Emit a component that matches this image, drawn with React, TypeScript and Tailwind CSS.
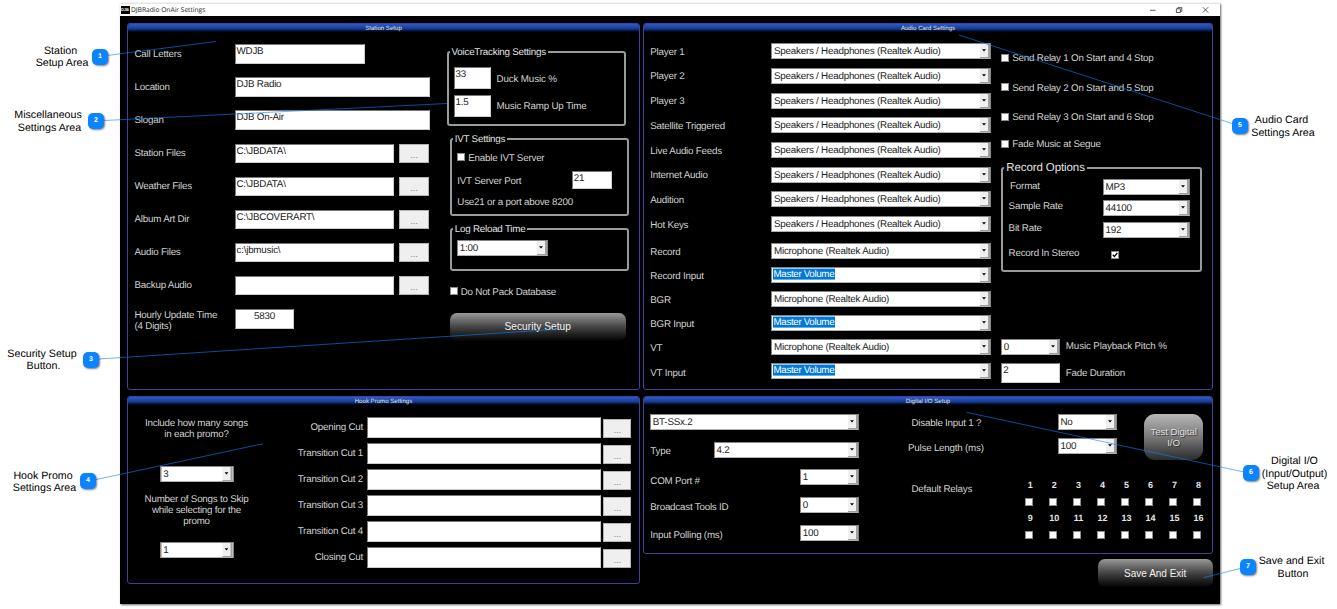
import { clsx } from 'clsx';
import type { ReactNode } from 'react';

interface PanelProps {
  title: string;
  className?: string;
  children: ReactNode;
}

function Panel({ title, className, children }: PanelProps) {
  return (
    <section className={clsx('rounded-[3px] border border-[#41419a] bg-black overflow-hidden', className)}>
      <h2 className="h-[9px] bg-gradient-to-b from-[#2a5ad2] via-[#173a8a] via-55% to-black text-center text-[6.1px] leading-[9px] tracking-normal text-[#e2e2e2]">
        {title}
      </h2>
      {children}
    </section>
  );
}

function Group({ title, className, legendClass, children }: PanelProps & { legendClass?: string }) {
  return (
    <fieldset className={clsx('rounded-[3px] border-2 border-[#979c9c]', className)}>
      <legend className={clsx('whitespace-nowrap text-[#e2e2e2]', legendClass ?? 'ml-[1px] px-[2px] pt-[1px] leading-[11px]')}>{title}</legend>
      {children}
    </fieldset>
  );
}

function Label({ children, className }: { children: ReactNode; className?: string }) {
  return <span className={clsx('shrink-0 translate-y-[0.6px] whitespace-nowrap leading-[11px] text-[#d2d2d2]', className)}>{children}</span>;
}

// Text box: the value sits at the top, not in the middle
function Field({ value, className }: { value?: string; className?: string }) {
  return (
    <div className={clsx('shrink-0 border border-t-[#777] border-l-[#777] border-r-[#ccc] border-b-[#ccc] bg-white pl-[1px] leading-[14px] text-[#222]', className)}>
      {value}
    </div>
  );
}

function Combo({ value, className, selected }: { value: string; className?: string; selected?: boolean }) {
  return (
    <div className={clsx('flex h-[16px] shrink-0 border border-[#858585] border-b-[#b0b0b0] bg-white text-[#222]', className)}>
      <span className="min-w-0 flex-1 translate-y-[0.6px] whitespace-nowrap pl-[1.5px] leading-[14px]">
        {selected ? (
          <span className="-ml-[1px] block h-[11px] w-[62px] bg-[#0078d7] pl-[0.5px] leading-[11px] tracking-[-0.35px] text-white">{value}</span>
        ) : (
          value
        )}
      </span>
      <span className="flex w-[10px] items-center justify-center border-r-2 border-b border-[#a0a0a0] bg-[#f0f0f0]">
        <svg width="4" height="3" viewBox="0 0 4 3"><path d="M0 0.3h4L2 2.6z" fill="#000" /></svg>
      </span>
    </div>
  );
}

function Browse({ className }: { className?: string }) {
  return (
    <button className={clsx('h-[19.5px] shrink-0 border border-[#b4b4b4] bg-[#efefef] text-center leading-[19px] text-[#8a8a8a]', className)}>...</button>
  );
}

function Box({ checked }: { checked?: boolean }) {
  return (
    <span className="flex size-[8px] shrink-0 items-center justify-center border border-[#8c8c8c] bg-white">
      {checked && (
        <svg width="6" height="6" viewBox="0 0 6 6"><path d="M0.8 2.8L2.4 4.5L5.3 1" fill="none" stroke="#000" strokeWidth="1.3" /></svg>
      )}
    </span>
  );
}

function Check({ label, className }: { label: string; className?: string }) {
  return (
    <div className={clsx('flex h-[12px] items-center gap-[3px]', className)}>
      <Box />
      <Label>{label}</Label>
    </div>
  );
}

const stationRows = [
  { label: 'Call Letters', value: 'WDJB', width: 'w-[130.5px]' },
  { label: 'Location', value: 'DJB Radio', width: 'w-[195px]' },
  { label: 'Slogan', value: 'DJB On-Air', width: 'w-[195px]' },
  { label: 'Station Files', value: 'C:\\JBDATA\\', browse: true },
  { label: 'Weather Files', value: 'C:\\JBDATA\\', browse: true },
  { label: 'Album Art Dir', value: 'C:\\JBCOVERART\\', browse: true },
  { label: 'Audio Files', value: 'c:\\jbmusic\\', browse: true },
  { label: 'Backup Audio', value: '', browse: true },
];

const outputs = ['Player 1', 'Player 2', 'Player 3', 'Satellite Triggered', 'Live Audio Feeds', 'Internet Audio', 'Audition', 'Hot Keys'];
const inputs = ['Record', 'Record Input', 'BGR', 'BGR Input', 'VT', 'VT Input'];
const cuts = ['Opening Cut', 'Transition Cut 1', 'Transition Cut 2', 'Transition Cut 3', 'Transition Cut 4', 'Closing Cut'];

function StationSetup() {
  return (
    <Panel title="Station Setup" className="h-[367px]">
      <div className="flex">
        <div className="flex w-[318.5px] flex-col gap-[13.6px] pt-[11.3px] pl-[6.5px]">
          {stationRows.map(r => (
            <div key={r.label} className="flex h-[19.5px]">
              <Label className="w-[100px] pt-[3.5px]">{r.label}</Label>
              <Field value={r.value} className={r.width ?? 'w-[159.5px]'} />
              {r.browse && <Browse className="ml-[5px] w-[30px]" />}
            </div>
          ))}
          <div className="flex h-[19.5px]">
            <Label className="w-[100px]">Hourly Update Time<br />(4 Digits)</Label>
            <Field value="5830" className="w-[59px] text-center" />
          </div>
        </div>

        <div className="flex flex-col pt-[13.3px]">
          <Group title="VoiceTracking Settings" className="h-[80.2px] w-[179px]">
            <div className="flex flex-col gap-[6px] pt-[9px] pl-[5px]">
              <div className="flex h-[22px] gap-[6px]">
                <Field value="33" className="w-[37px]" />
                <Label className="pt-[5.5px] tracking-[-0.14px]">Duck Music %</Label>
              </div>
              <div className="flex h-[22px] gap-[6px]">
                <Field value="1.5" className="w-[37px]" />
                <Label className="pt-[4.5px] tracking-[-0.2px]">Music Ramp Up Time</Label>
              </div>
            </div>
          </Group>

          <Group title="IVT Settings" className="mt-[6.5px] ml-[3.2px] h-[83px] w-[179px]">
            <div className="pt-[6.5px] pl-[5.6px]">
              <Check label="Enable IVT Server" />
              <div className="mt-[7.8px] flex h-[18px]">
                <Label className="w-[114.4px] pt-[3.5px]">IVT Server Port</Label>
                <Field value="21" className="w-[40.5px]" />
              </div>
              <Label className="mt-[6.5px] block">Use21 or a port above 8200</Label>
            </div>
          </Group>

          <Group title="Log Reload Time" className="mt-[7px] ml-[3.2px] h-[48.5px] w-[179px]">
            <div className="pt-[5.3px] pl-[5.6px]">
              <Combo value="1:00" className="w-[91px]" />
            </div>
          </Group>

          <Check label="Do Not Pack Database" className="mt-[13.7px] ml-[3.2px]" />
          <button className="mt-[15.8px] ml-[3.2px] h-[28px] w-[176px] rounded-[7px] bg-gradient-to-b from-[#9a9a9a] via-[#4c4c4c] via-45% to-[#050505] text-[10.2px] tracking-normal text-[#f0f0f0]">
            Security Setup
          </button>
        </div>
      </div>
    </Panel>
  );
}

function AudioCardSettings() {
  return (
    <Panel title="Audio Card Settings" className="h-[367px]">
      <div className="flex pl-[6.3px]">
        <div className="w-[351px] pt-[10.3px]">
          <div className="flex flex-col gap-[8.7px]">
            {outputs.map(name => (
              <div key={name} className="flex h-[16px] items-center">
                <Label className="w-[121.2px]">{name}</Label>
                <Combo value="Speakers / Headphones (Realtek Audio)" className="w-[220px]" />
              </div>
            ))}
          </div>
          <div className="mt-[10.5px] flex flex-col gap-[8.1px]">
            {inputs.map((name, i) => (
              <div key={name} className="flex h-[16px]">
                <Label className="w-[121.2px] pt-[3.5px]">{name}</Label>
                {i % 2 ? (
                  <Combo value="Master Volume" className="w-[220px]" selected />
                ) : (
                  <Combo value="Microphone (Realtek Audio)" className="w-[220px]" />
                )}
              </div>
            ))}
          </div>
        </div>

        <div className="pt-[18.7px]">
          <Check label="Send Relay 1 On Start and 4 Stop" />
          <Check label="Send Relay 2 On Start and 5 Stop" className="mt-[17.6px]" />
          <Check label="Send Relay 3 On Start and 6 Stop" className="mt-[17.4px]" />
          <Check label="Fade Music at Segue" className="mt-[15.3px]" />

          <Group
            title="Record Options"
            className="mt-[11.5px] h-[110.5px] w-[200.5px]"
            legendClass="ml-[1px] px-[2px] pt-[1px] text-[11.5px] leading-[13px] tracking-[-0.1px]"
          >
            <div className="flex flex-col gap-[5.5px] pt-[3.5px] pl-[5.3px]">
              <div className="flex">
                <Label className="w-[94.4px] pt-[1px] pl-[1.5px]">Format</Label>
                <Combo value="MP3" className="w-[87px]" />
              </div>
              <div className="flex">
                <Label className="w-[94.4px]">Sample Rate</Label>
                <Combo value="44100" className="w-[87px]" />
              </div>
              <div className="flex">
                <Label className="w-[94.4px]">Bit Rate</Label>
                <Combo value="192" className="w-[87px]" />
              </div>
              <div className="mt-[4px] flex">
                <Label className="w-[102px]">Record In Stereo</Label>
                <span className="pt-[4px]"><Box checked /></span>
              </div>
            </div>
          </Group>

          <div className="mt-[67px] flex gap-[6px]">
            <Combo value="0" className="w-[58.5px]" />
            <Label className="pt-[1.5px] tracking-[-0.14px]">Music Playback Pitch %</Label>
          </div>
          <div className="mt-[8.3px] flex gap-[6px]">
            <Field value="2" className="h-[19.5px] w-[58.5px]" />
            <Label className="pt-[3.5px]">Fade Duration</Label>
          </div>
        </div>
      </div>
    </Panel>
  );
}

function HookPromo() {
  return (
    <Panel title="Hook Promo Settings" className="h-[188px]">
      <div className="flex">
        <div className="flex w-[137px] flex-col items-center pt-[11.2px] text-center leading-[11px] text-[#d2d2d2]">
          <p className="translate-y-[0.6px]">Include how many songs<br />in each promo?</p>
          <Combo value="3" className="mt-[26.8px] w-[72.7px] translate-x-[0.5px] text-left" />
          <p className="mt-[12px]">Number of Songs to Skip<br />while selecting for the<br />promo</p>
          <Combo value="1" className="mt-[15.5px] w-[72.7px] translate-x-[0.5px] text-left" />
        </div>
        <div className="flex flex-col gap-[5px] pt-[11px]">
          {cuts.map(name => (
            <div key={name} className="flex h-[21px]">
              <Label className="w-[102px] pt-[3.5px] pr-[4px] text-right">{name}</Label>
              <Field className="w-[234px]" />
              <Browse className="mt-[1.5px] ml-[2px] w-[28.3px]" />
            </div>
          ))}
        </div>
      </div>
    </Panel>
  );
}

function Relays({ from }: { from: number }) {
  return (
    <div className="grid grid-cols-[repeat(8,24.05px)] justify-items-center text-[9px] font-bold leading-[12px] tracking-normal text-[#e6e6e6]">
      {Array.from({ length: 8 }, (_, i) => (
        <div key={i} className="flex flex-col items-center gap-[7px]">
          <span>{from + i}</span>
          <span className="pr-[3px]"><Box /></span>
        </div>
      ))}
    </div>
  );
}

function DigitalIO() {
  return (
    <Panel title="Digital I/O Setup" className="h-[158px]">
      <div className="flex pl-[6.3px]">
        <div className="flex w-[208.7px] flex-col pt-[8px]">
          <Combo value="BT-SSx.2" />
          <div className="mt-[12px] flex justify-between">
            <Label className="pt-[3px]">Type</Label>
            <Combo value="4.2" className="w-[145px]" />
          </div>
          <div className="mt-[11.3px] flex justify-between">
            <Label className="pt-[5.5px]">COM Port #</Label>
            <Combo value="1" className="w-[58.7px]" />
          </div>
          <div className="mt-[11.7px] flex justify-between">
            <Label className="pt-[4px]">Broadcast Tools ID</Label>
            <Combo value="0" className="w-[58.7px]" />
          </div>
          <div className="mt-[12px] flex justify-between">
            <Label className="pt-[4px]">Input Polling (ms)</Label>
            <Combo value="100" className="w-[58.7px]" />
          </div>
        </div>

        <div className="pl-[49px]">
          <div className="flex h-[53.5px] pt-[7.7px]">
            <div className="flex flex-col gap-[8px]">
              <div className="flex">
                <Label className="w-[150px] pt-[3.5px] pl-[3.5px]">Disable Input 1 ?</Label>
                <Combo value="No" className="w-[58.7px]" />
              </div>
              <div className="flex">
                <Label className="w-[150px] pt-[4px]">Pulse Length (ms)</Label>
                <Combo value="100" className="w-[58.7px]" />
              </div>
            </div>
            <button className="ml-[27.6px] h-[46px] w-[58.7px] shrink-0 rounded-[11px] bg-gradient-to-b from-[#b8b8b8] via-[#7a7a7a] to-[#2c2c2c] leading-[11px] tracking-[-0.15px] text-[#dedede] [text-shadow:1px_1px_1px_#333]">
              Test Digital<br />I/O
            </button>
          </div>
          <div className="mt-[19.8px] flex">
            <Label className="w-[110.3px] pt-[3.5px] pl-[3.5px]">Default Relays</Label>
            <div className="flex flex-col gap-[6px]">
              <Relays from={1} />
              <Relays from={9} />
            </div>
          </div>
        </div>
      </div>
    </Panel>
  );
}

function TitleBar() {
  return (
    <header className="flex h-[13px] items-center border-t border-[#e4e4e4] bg-white">
      <span className="ml-[0.5px] flex h-[8.5px] w-[9px] items-center justify-center bg-black text-[4px] font-bold tracking-normal text-white">DJB</span>
      <h1 className="ml-[1.5px] flex-1 font-['Open_Sans'] text-[6.7px] tracking-[-0.02px] text-[#222]">DJBRadio OnAir Settings</h1>
      <svg width="66" height="12" viewBox="0 0 66 12" fill="none" stroke="#333" strokeWidth="0.8" className="mr-[7px]">
        <path d="M3 6.3h5.6" />
        <path d="M29.4 4.8h4v3.7h-4zM30.8 4.8V3.6h4v3.7h-1.3" />
        <path d="M55.8 3.2l5.4 5.4M61.2 3.2l-5.4 5.4" />
      </svg>
    </header>
  );
}

// Callouts over the window: badge position, pointer line end and label
const callouts = [
  { n: 1, badge: 'left-[92px] top-[49px]', label: 'left-[2px] top-[44.5px]', lines: ['Station ', 'Setup Area'], from: [107, 55.5], to: [216, 41.5] },
  { n: 2, badge: 'left-[88px] top-[113px]', label: '-left-[10.5px] top-[109px]', lines: ['Miscellaneous ', 'Settings Area'], from: [104, 120.5], to: [447, 103.5] },
  { n: 3, badge: 'left-[83px] top-[352px]', label: '-left-[16.5px] top-[347.5px]', lines: ['Security Setup ', 'Button.'], from: [99, 359], to: [557, 329.3] },
  { n: 4, badge: 'left-[80px] top-[473px]', label: '-left-[15.5px] top-[469.5px]', lines: ['Hook Promo ', 'Settings Area'], from: [95, 479.8], to: [263, 443.7] },
  { n: 5, badge: 'left-[1232px] top-[118px]', label: 'left-[1223px] top-[114px]', lines: ['Audio Card ', 'Settings Area'], from: [1233, 123.8], to: [959, 35] },
  { n: 6, badge: 'left-[1243px] top-[465px]', label: 'left-[1234.5px] top-[455px]', lines: ['Digital I/O', '(Input/Output)', 'Setup Area '], from: [1244, 472], to: [966.5, 412.3] },
  { n: 7, badge: 'left-[1240px] top-[559px]', label: 'left-[1233px] top-[555px]', lines: ['Save and Exit ', 'Button'], from: [1241, 568.3], to: [1203.5, 577.7] },
];

function Callouts() {
  return (
    <>
      <svg width="1337" height="609" className="pointer-events-none absolute inset-0">
        {callouts.map(c => (
          <line key={c.n} x1={c.from[0]} y1={c.from[1]} x2={c.to[0]} y2={c.to[1]} stroke="#0a84ff" strokeOpacity="0.6" strokeWidth="1" />
        ))}
      </svg>
      {callouts.map(c => (
        <div key={c.n}>
          <span className={clsx('absolute flex size-[16px] items-center justify-center rounded-[5px] bg-[#0a84ff] text-[7px] font-bold tracking-normal text-white shadow-[1px_1px_2px_rgba(0,0,0,0.5)]', c.badge)}>
            {c.n}
          </span>
          <p className={clsx('absolute w-[120px] whitespace-pre text-center text-[10.67px] leading-[12.6px] tracking-normal text-black', c.label)}>
            {c.lines.join('\n')}
          </p>
        </div>
      ))}
    </>
  );
}

export default function App() {
  return (
    <div className="relative h-[609px] w-[1337px] overflow-hidden bg-white pt-[3px] pl-[120px] font-['Liberation_Sans',Arial,sans-serif] text-[9.8px] tracking-[-0.22px] [text-rendering:geometricPrecision]">
      <main className="h-[600.5px] w-[1100px] bg-black shadow-[1px_1px_2px_rgba(0,0,0,0.6)]">
        <TitleBar />
        <div className="flex gap-[3px] pt-[7px] pl-[7px]">
          <div className="flex w-[513px] flex-col gap-[6px]">
            <StationSetup />
            <HookPromo />
          </div>
          <div className="flex w-[570px] flex-col gap-[6px]">
            <AudioCardSettings />
            <DigitalIO />
            <button className="-mt-[1px] h-[28px] w-[115.5px] self-end rounded-[7px] bg-gradient-to-b from-[#9a9a9a] via-[#4c4c4c] via-45% to-[#050505] text-[10px] tracking-normal text-[#f0f0f0]">
              Save And Exit
            </button>
          </div>
        </div>
      </main>
      <Callouts />
    </div>
  );
}
